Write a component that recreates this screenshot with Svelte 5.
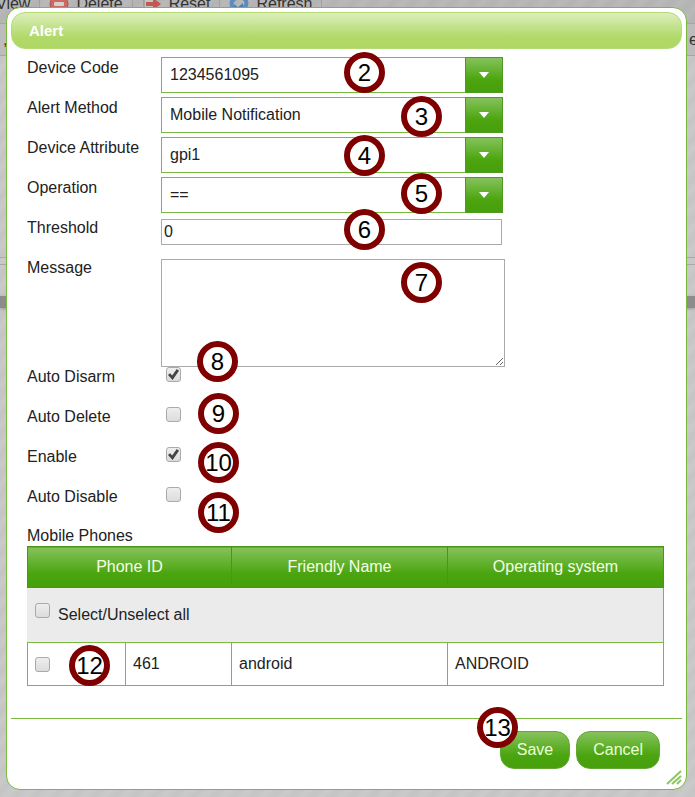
<script lang="ts">
  type Combo = { id: string; label: string; value: string; options: string[] }
  type Toggle = { id: string; label: string; checked: boolean }

  let combos: Combo[] = $state([
    { id: 'device-code', label: 'Device Code', value: '1234561095', options: ['1234561095'] },
    { id: 'alert-method', label: 'Alert Method', value: 'Mobile Notification', options: ['Mobile Notification'] },
    { id: 'device-attribute', label: 'Device Attribute', value: 'gpi1', options: ['gpi1'] },
    { id: 'operation', label: 'Operation', value: '==', options: ['=='] },
  ])

  let toggles: Toggle[] = $state([
    { id: 'auto-disarm', label: 'Auto Disarm', checked: true },
    { id: 'auto-delete', label: 'Auto Delete', checked: false },
    { id: 'enable', label: 'Enable', checked: true },
    { id: 'auto-disable', label: 'Auto Disable', checked: false },
  ])

  let phones = $state([{ id: '461', name: 'android', os: 'ANDROID', selected: false }])

  let threshold = $state('0')
  let message = $state('')

  // Numbered callouts, placed by their centre.
  const callouts = [
    { n: 2, x: 364, y: 72 },
    { n: 3, x: 421, y: 116 },
    { n: 4, x: 364, y: 155 },
    { n: 5, x: 421, y: 193 },
    { n: 6, x: 364, y: 229 },
    { n: 7, x: 421, y: 282 },
    { n: 8, x: 217, y: 361 },
    { n: 9, x: 218, y: 413 },
    { n: 10, x: 218, y: 462 },
    { n: 11, x: 218, y: 512 },
    { n: 12, x: 89, y: 665 },
    { n: 13, x: 497, y: 727 },
  ]

  function toggleAll(event: Event) {
    const { checked } = event.currentTarget as HTMLInputElement
    phones.forEach((phone) => (phone.selected = checked))
  }
</script>

<div class="page">
  <div class="backdrop">
    <div class="toolbar">
      <span class="tool">View</span>
      <span class="tool">
        <svg width="20" height="20" viewBox="0 0 20 20">
          <circle cx="10" cy="10" r="9" fill="#cc6a62" stroke="#b8504a" />
          <rect x="5" y="8" width="10" height="4" rx="1" fill="#d6cfcf" />
        </svg>
        Delete
      </span>
      <span class="tool">
        <svg width="20" height="20" viewBox="0 0 20 20">
          <path d="M2 2h10v16H2z" fill="#c4c4c4" stroke="#858585" />
          <path d="M4 8h7V4l8 6-8 6v-4H4z" fill="#c4584f" />
        </svg>
        Reset
      </span>
      <span class="tool">
        <svg width="20" height="20" viewBox="0 0 20 20">
          <path d="M8 15C1 14 1 6 7 4M12 3c7 2 7 10 1 11" fill="none" stroke="#5a8cc0" stroke-width="4" />
          <path d="M5 10l6 5-6 4zM14 18l-6-4 6-5z" fill="#4c7fb4" />
        </svg>
        Refresh
      </span>
    </div>
    <div class="strip"><span>,</span><span>e</span></div>
    <div class="rows"></div>
    <div class="status"></div>
    <div class="shade"></div>
  </div>

  <form class="dialog" onsubmit={(event) => event.preventDefault()}>
    <h1>Alert</h1>

    <div class="content">
      {#each combos as combo (combo.id)}
        <div class="row">
          <label for={combo.id}>{combo.label}</label>
          <div class="combo">
            <select id={combo.id} bind:value={combo.value}>
              {#each combo.options as option}
                <option>{option}</option>
              {/each}
            </select>
            <span class="arrow"><svg width="12" height="6" viewBox="0 0 12 6"><path d="M1 0h10L6 6z" fill="#fff" /></svg></span>
          </div>
        </div>
      {/each}

      <div class="row">
        <label for="threshold">Threshold</label>
        <input id="threshold" type="text" bind:value={threshold} />
      </div>

      <div class="row message">
        <label for="message">Message</label>
        <textarea id="message" bind:value={message}></textarea>
      </div>

      {#each toggles as toggle (toggle.id)}
        <div class="row toggle">
          <label for={toggle.id}>{toggle.label}</label>
          <input id={toggle.id} type="checkbox" bind:checked={toggle.checked} />
        </div>
      {/each}

      <table>
        <caption>Mobile Phones</caption>
        <colgroup>
          <col class="col-check" />
          <col class="col-id" />
          <col class="col-name" />
          <col />
        </colgroup>
        <thead>
          <tr>
            <th colspan="2">Phone ID</th>
            <th>Friendly Name</th>
            <th>Operating system</th>
          </tr>
        </thead>
        <tbody>
          <tr class="all">
            <td colspan="4">
              <div>
                <input id="select-all" type="checkbox" onchange={toggleAll} />
                <label for="select-all">Select/Unselect all</label>
              </div>
            </td>
          </tr>
          {#each phones as phone (phone.id)}
            <tr class="phone">
              <td><input type="checkbox" aria-label={phone.id} bind:checked={phone.selected} /></td>
              <td>{phone.id}</td>
              <td>{phone.name}</td>
              <td>{phone.os}</td>
            </tr>
          {/each}
        </tbody>
      </table>
    </div>

    <footer>
      <button type="submit">Save</button>
      <button type="button">Cancel</button>
    </footer>

    <svg class="grip" width="16" height="16" viewBox="0 0 16 16">
      <path d="M1 14L15 1M6 14l9-8M11 14l4-4" fill="none" stroke="#8cc65e" stroke-width="2" />
    </svg>
  </form>

  {#each callouts as callout (callout.n)}
    <span class="callout" style="left: {callout.x}px; top: {callout.y}px">{callout.n}</span>
  {/each}
</div>

<style>
  :global(body) {
    margin: 0;
    background: #c6c6c6;
  }

  .page {
    --green: #79b93f;
    --button: linear-gradient(#86c25c, #4ba50f 65%, #469f0b);

    position: relative;
    box-sizing: border-box;
    min-height: 100vh;
    padding: 7px 8px 7px 6px;
    overflow: hidden;
    font: 16px/20px 'Liberation Sans', Arial, sans-serif;
    color: #222;
    background: repeating-linear-gradient(135deg, #c4c4c4 0, #cacaca 7px, #c4c4c4 14px);
  }

  .backdrop {
    position: absolute;
    inset: 0;
    color: #333;
  }

  .toolbar {
    display: flex;
    height: 23px;
    background: repeating-linear-gradient(135deg, #b3b3b3 0, #b9b9b9 7px, #b3b3b3 14px);
    border-bottom: 1px solid #a5a5a5;
  }

  .tool {
    display: flex;
    gap: 7px;
    height: 20px;
    padding: 0 9px;
    margin-top: -6px;
    border-right: 1px solid #a0a0a0;
  }

  .tool:first-child {
    padding-left: 0;
    margin-left: -4px;
  }

  .strip {
    display: flex;
    align-items: center;
    justify-content: space-between;
    height: 31px;
    padding-left: 3px;
    margin-right: -3px;
    background: #bcbcbc;
    border-bottom: 1px solid #a5a5a5;
  }

  .rows {
    height: 201px;
    border-bottom: 1px solid #a8a8a8;
  }

  .status {
    height: 6px;
    background: #c8c8c8;
    border-bottom: 1px solid #a8a8a8;
  }

  .shade {
    height: 12px;
    margin-top: 31px;
    background: #8c8c8c;
    box-shadow: 0 1px 3px #999;
  }

  .dialog {
    position: relative;
    box-sizing: border-box;
    padding: 4px;
    background: #fff;
    border: 1px solid var(--green);
    border-radius: 14px;
  }

  h1 {
    padding: 8px 17px;
    margin: 0;
    font-size: 15px;
    line-height: 19px;
    color: #fff;
    background: linear-gradient(#dceebb, #b0d968 70%, #aed766);
    border: 1px solid #b4dc74;
    border-radius: 14px;
  }

  .content {
    padding: 8px 18px 0 16px;
  }

  .row {
    display: grid;
    grid-template-columns: 134px minmax(0, 344px);
    align-items: start;
    height: 40px;
  }

  .row label {
    padding-top: 1px;
  }

  .combo {
    position: relative;
    margin-right: 2px;
  }

  select {
    box-sizing: border-box;
    width: 100%;
    height: 36px;
    padding: 0 40px 0 8px;
    font: inherit;
    color: inherit;
    appearance: none;
    background: #fff;
    border: 1px solid var(--green);
    border-radius: 0;
  }

  .arrow {
    position: absolute;
    top: 0;
    right: 0;
    bottom: 0;
    display: flex;
    align-items: center;
    justify-content: center;
    width: 38px;
    box-sizing: border-box;
    background: var(--button);
    border: 1px solid #4f9a20;
    pointer-events: none;
  }

  input[type='text'],
  textarea {
    box-sizing: border-box;
    width: 100%;
    padding: 2px;
    font: inherit;
    color: inherit;
    background: #fff;
    border: 1px solid #aaa;
  }

  input[type='text'] {
    width: calc(100% - 3px);
    height: 26px;
    margin-top: 2px;
  }

  .message {
    height: 109px;
  }

  textarea {
    height: 108px;
    margin-top: 2px;
  }

  input[type='checkbox'] {
    width: 15px;
    height: 15px;
    margin: 0;
    appearance: none;
    background: linear-gradient(#eee, #dcdcdc);
    border: 1px solid #aaa;
    border-radius: 3px;
    box-sizing: border-box;
  }

  input[type='checkbox']:checked {
    display: grid;
    place-items: center;
  }

  input[type='checkbox']:checked::before {
    width: 11px;
    height: 11px;
    content: '';
    background: #444;
    clip-path: polygon(0 55%, 18% 38%, 38% 58%, 80% 0, 100% 16%, 42% 100%);
  }

  .toggle input {
    margin: 1px 0 0 5px;
  }

  table {
    width: 100%;
    table-layout: fixed;
    border-collapse: collapse;
  }

  caption {
    padding-bottom: 0;
    text-align: left;
  }

  .col-check {
    width: 98px;
  }

  .col-id {
    width: 106px;
  }

  .col-name {
    width: 216px;
  }

  th {
    height: 40px;
    padding: 0;
    font-weight: normal;
    color: #f4ffe8;
    background: var(--button);
    border: 1px solid #4a9618;
  }

  td {
    padding: 0 7px;
    border: 1px solid var(--green);
  }

  .all td {
    height: 54px;
    background: #ebebeb;
    border-left-color: #ebebeb;
  }

  .all div {
    display: flex;
    gap: 8px;
  }

  .all input {
    margin-top: -2px;
  }

  .phone td {
    height: 42px;
  }

  .phone input {
    display: block;
  }

  footer {
    display: flex;
    gap: 6px;
    justify-content: flex-end;
    padding: 12px 22px 16px;
    margin-top: 32px;
    border-top: 1px solid var(--green);
  }

  button {
    height: 38px;
    padding: 0 16px;
    font: inherit;
    color: #eaffd5;
    background: var(--button);
    border: 1px solid #62a834;
    border-radius: 14px;
  }

  .grip {
    position: absolute;
    right: 4px;
    bottom: 3px;
  }

  .callout {
    position: absolute;
    box-sizing: border-box;
    display: flex;
    align-items: center;
    justify-content: center;
    width: 41px;
    height: 41px;
    margin: -20px 0 0 -20px;
    font-size: 24px;
    color: #000;
    background: #fff;
    border: 6px solid #7f0000;
    border-radius: 50%;
  }
</style>
